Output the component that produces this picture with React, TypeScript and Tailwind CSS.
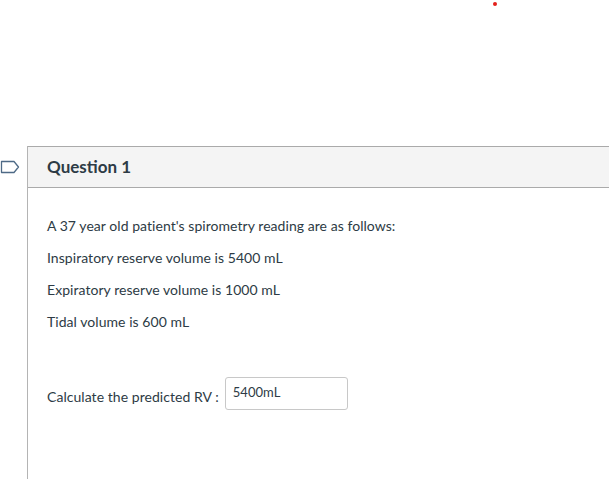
import React from 'react';

const Flag: React.FC = () => (
  <svg width="20" height="14" viewBox="0 0 20 14" fill="none">
    <path d="M1.5 1.5 H14 L18.5 7 L14 12.5 H1.5 Z" stroke="#4e6a86" strokeWidth="1.3" strokeLinejoin="round" />
  </svg>
);

const App: React.FC = () => {
  const lines = [
    "A 37 year old patient's spirometry reading are as follows:",
    'Inspiratory reserve volume is 5400 mL',
    'Expiratory reserve volume is 1000 mL',
    'Tidal volume is 600 mL',
  ];

  return (
    <div className="h-[479px] w-[609px] overflow-hidden bg-white text-[#2d3b45]" style={{ fontFamily: 'Lato, "Noto Sans", sans-serif' }}>
      <div className="flex h-[146px] justify-end">
        <span className="mr-[112px] mt-[2px] h-[4px] w-[4px] rounded-full bg-[#e3201b]" />
      </div>
      <div className="flex">
        <div className="w-[27px] shrink-0 pt-[14px]">
          <Flag />
        </div>
        <div className="w-[640px] shrink-0 border-l border-[#b4b4b4] min-h-[340px]">
          <div className="flex h-[42px] items-center border-y border-[#aaaaaa] bg-[#f4f4f4] pl-[19px]">
            <h2 className="text-[17px] font-bold">Question 1</h2>
          </div>
          <div className="pl-[19px] pt-[29px] text-[14px] tracking-[0.05px]">
            <div className="flex flex-col gap-[14px]">
              {lines.map((l) => (
                <p key={l} className="leading-[18px]">{l}</p>
              ))}
            </div>
            <div className="mt-[46px] flex items-center gap-[6px]">
              <span className="mt-[5px]">Calculate the predicted RV :</span>
              <div className="flex h-[33px] w-[123px] items-center rounded-[3px] border border-[#c8c8c8] pl-[7px] pb-[2px] text-[13px]">
                5400mL
              </div>
            </div>
          </div>
        </div>
      </div>
    </div>
  );
};

export default App;
